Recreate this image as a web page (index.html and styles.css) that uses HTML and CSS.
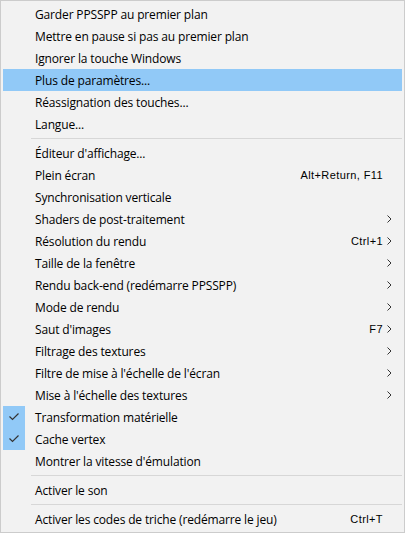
FILE: index.html
```html
<!DOCTYPE html>
<html lang="fr">
<head>
<meta charset="utf-8">
<link rel="stylesheet" href="styles.css">
</head>
<body>
<div class="menu">
  <div class="item"><span class="gutter"></span><span class="label">Garder PPSSPP au premier plan</span></div>
  <div class="item"><span class="gutter"></span><span class="label">Mettre en pause si pas au premier plan</span></div>
  <div class="item"><span class="gutter"></span><span class="label">Ignorer la touche Windows</span></div>
  <div class="item hover"><span class="gutter"></span><span class="label">Plus de paramètres...</span></div>
  <div class="item"><span class="gutter"></span><span class="label">Réassignation des touches...</span></div>
  <div class="item"><span class="gutter"></span><span class="label">Langue...</span></div>
  <div class="sep"></div>
  <div class="item"><span class="gutter"></span><span class="label">Éditeur d'affichage...</span></div>
  <div class="item"><span class="gutter"></span><span class="label">Plein écran</span><span class="key">Alt+Return, F11</span><span class="arrow"></span></div>
  <div class="item"><span class="gutter"></span><span class="label">Synchronisation verticale</span></div>
  <div class="item"><span class="gutter"></span><span class="label">Shaders de post-traitement</span><span class="arrow"><svg viewBox="0 0 5 8" width="5" height="8"><path d="M0.5 0.5 L4 4 L0.5 7.5" fill="none" stroke="#333" stroke-width="1"/></svg></span></div>
  <div class="item"><span class="gutter"></span><span class="label">Résolution du rendu</span><span class="key">Ctrl+1</span><span class="arrow"><svg viewBox="0 0 5 8" width="5" height="8"><path d="M0.5 0.5 L4 4 L0.5 7.5" fill="none" stroke="#333" stroke-width="1"/></svg></span></div>
  <div class="item"><span class="gutter"></span><span class="label">Taille de la fenêtre</span><span class="arrow"><svg viewBox="0 0 5 8" width="5" height="8"><path d="M0.5 0.5 L4 4 L0.5 7.5" fill="none" stroke="#333" stroke-width="1"/></svg></span></div>
  <div class="item"><span class="gutter"></span><span class="label">Rendu back-end (redémarre PPSSPP)</span><span class="arrow"><svg viewBox="0 0 5 8" width="5" height="8"><path d="M0.5 0.5 L4 4 L0.5 7.5" fill="none" stroke="#333" stroke-width="1"/></svg></span></div>
  <div class="item"><span class="gutter"></span><span class="label">Mode de rendu</span><span class="arrow"><svg viewBox="0 0 5 8" width="5" height="8"><path d="M0.5 0.5 L4 4 L0.5 7.5" fill="none" stroke="#333" stroke-width="1"/></svg></span></div>
  <div class="item"><span class="gutter"></span><span class="label">Saut d'images</span><span class="key">F7</span><span class="arrow"><svg viewBox="0 0 5 8" width="5" height="8"><path d="M0.5 0.5 L4 4 L0.5 7.5" fill="none" stroke="#333" stroke-width="1"/></svg></span></div>
  <div class="item"><span class="gutter"></span><span class="label">Filtrage des textures</span><span class="arrow"><svg viewBox="0 0 5 8" width="5" height="8"><path d="M0.5 0.5 L4 4 L0.5 7.5" fill="none" stroke="#333" stroke-width="1"/></svg></span></div>
  <div class="item"><span class="gutter"></span><span class="label">Filtre de mise à l'échelle de l'écran</span><span class="arrow"><svg viewBox="0 0 5 8" width="5" height="8"><path d="M0.5 0.5 L4 4 L0.5 7.5" fill="none" stroke="#333" stroke-width="1"/></svg></span></div>
  <div class="item"><span class="gutter"></span><span class="label">Mise à l'échelle des textures</span><span class="arrow"><svg viewBox="0 0 5 8" width="5" height="8"><path d="M0.5 0.5 L4 4 L0.5 7.5" fill="none" stroke="#333" stroke-width="1"/></svg></span></div>
  <div class="item"><span class="gutter checked"><svg viewBox="0 0 10 8" width="10" height="8"><path d="M0.5 3.5 L3.5 6.5 L9.5 0.5" fill="none" stroke="#333" stroke-width="1.2"/></svg></span><span class="label">Transformation matérielle</span></div>
  <div class="item"><span class="gutter checked"><svg viewBox="0 0 10 8" width="10" height="8"><path d="M0.5 3.5 L3.5 6.5 L9.5 0.5" fill="none" stroke="#333" stroke-width="1.2"/></svg></span><span class="label">Cache vertex</span></div>
  <div class="item"><span class="gutter"></span><span class="label">Montrer la vitesse d'émulation</span></div>
  <div class="sep"></div>
  <div class="item"><span class="gutter"></span><span class="label">Activer le son</span></div>
  <div class="sep"></div>
  <div class="item"><span class="gutter"></span><span class="label">Activer les codes de triche (redémarre le jeu)</span><span class="key">Ctrl+T</span><span class="arrow"></span></div>
</div>
</body>
</html>
```

FILE: styles.css
```css
html, body {
  margin: 0;
  padding: 0;
  background: #f2f2f2;
}

.menu {
  box-sizing: border-box;
  width: 405px;
  height: 533px;
  border: 1px solid #cccccc;
  padding: 2px;
  background: #f2f2f2;
  display: flex;
  flex-direction: column;
  font-family: "Open Sans", "Noto Sans", sans-serif;
  font-size: 12px;
  color: #000;
}

.item {
  height: 22px;
  display: flex;
  align-items: center;
  flex: 0 0 22px;
}

.item.hover {
  background: #91c9f7;
}

.gutter {
  width: 22px;
  height: 22px;
  flex: 0 0 22px;
  display: flex;
  align-items: center;
  justify-content: center;
}

.gutter.checked {
  background: #91c9f7;
}

.label {
  flex: 1;
  padding-left: 10px;
  white-space: nowrap;
  letter-spacing: -0.15px;
}

.key {
  font-family: "Liberation Sans", Arial, sans-serif;
  font-size: 11px;
  letter-spacing: 0.4px;
  white-space: nowrap;
}

.arrow {
  width: 19px;
  flex: 0 0 19px;
  height: 22px;
  display: flex;
  align-items: center;
  padding-left: 4px;
  box-sizing: border-box;
}

.sep {
  flex: 0 0 7px;
  height: 7px;
  display: flex;
  align-items: center;
  padding-left: 28px;
}

.sep::before {
  content: "";
  display: block;
  flex: 1;
  height: 1px;
  background: #d7d7d7;
}
```
